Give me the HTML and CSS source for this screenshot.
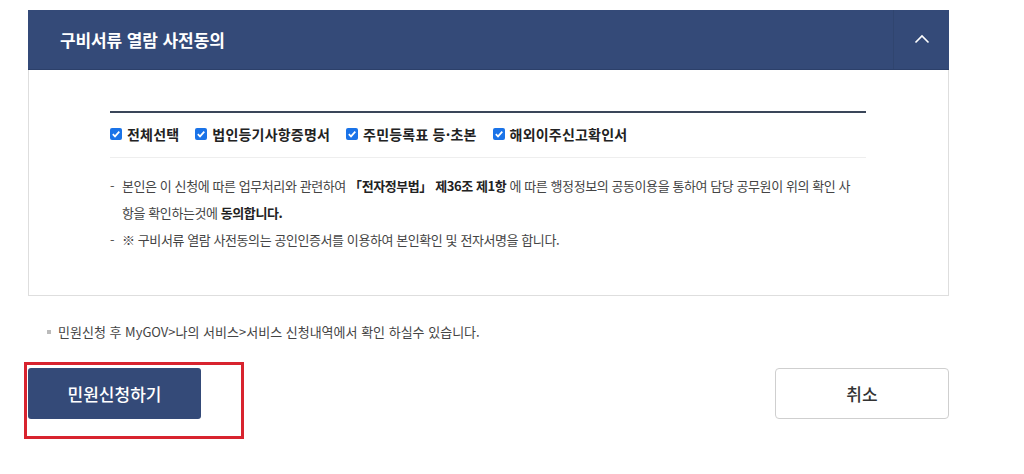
FILE: index.html
```html
<!DOCTYPE html>
<html lang="ko">
<head>
<meta charset="utf-8">
<link rel="stylesheet" href="styles.css">
</head>
<body>
<div class="wrap">
  <section class="panel">
    <div class="panel-head">
      <h2 class="panel-title">구비서류 열람 사전동의</h2>
      <button class="toggle" type="button" aria-label="접기">
        <svg width="16" height="10" viewBox="0 0 16 10"><path d="M1.5 8.5 L8 2 L14.5 8.5" fill="none" stroke="#fff" stroke-width="1.6"/></svg>
      </button>
    </div>
    <div class="panel-body">
      <div class="checks">
        <label class="chk"><span class="box"><svg viewBox="0 0 12 12" width="12" height="12"><path d="M2.8 6.2 L5 8.4 L9.3 3.6" fill="none" stroke="#fff" stroke-width="1.7"/></svg></span>전체선택</label>
        <label class="chk"><span class="box"><svg viewBox="0 0 12 12" width="12" height="12"><path d="M2.8 6.2 L5 8.4 L9.3 3.6" fill="none" stroke="#fff" stroke-width="1.7"/></svg></span>법인등기사항증명서</label>
        <label class="chk"><span class="box"><svg viewBox="0 0 12 12" width="12" height="12"><path d="M2.8 6.2 L5 8.4 L9.3 3.6" fill="none" stroke="#fff" stroke-width="1.7"/></svg></span>주민등록표 등·초본</label>
        <label class="chk"><span class="box"><svg viewBox="0 0 12 12" width="12" height="12"><path d="M2.8 6.2 L5 8.4 L9.3 3.6" fill="none" stroke="#fff" stroke-width="1.7"/></svg></span>해외이주신고확인서</label>
      </div>
      <ul class="desc">
        <li>본인은 이 신청에 따른 업무처리와 관련하여 <b>「전자정부법」 제36조 제1항</b> 에 따른 행정정보의 공동이용을 통하여 담당 공무원이 위의 확인 사<br>항을 확인하는것에 <b>동의합니다.</b></li>
        <li>※ 구비서류 열람 사전동의는 공인인증서를 이용하여 본인확인 및 전자서명을 합니다.</li>
      </ul>
    </div>
  </section>
  <p class="note">민원신청 후 MyGOV&gt;나의 서비스&gt;서비스 신청내역에서 확인 하실수 있습니다.</p>
  <div class="actions">
    <div class="highlight">
      <button class="btn primary" type="button">민원신청하기</button>
    </div>
    <button class="btn cancel" type="button">취소</button>
  </div>
</div>
</body>
</html>
```

FILE: styles.css
```css
* { box-sizing: border-box; }
html, body { margin: 0; padding: 0; background: #fff; }
body {
  font-family: "Noto Sans CJK KR", "Noto Sans", sans-serif;
  color: #333;
}
.wrap {
  width: 921px;
  margin-left: 28px;
  padding-top: 10px;
}
.panel-head {
  display: flex;
  height: 60px;
  background: #344a78;
  border-bottom: 1px solid #2c406a;
}
.panel-title {
  flex: 1;
  margin: 0;
  padding-left: 32px;
  display: flex;
  align-items: center;
  font-size: 17px;
  font-weight: 700;
  letter-spacing: -0.1px;
  color: #fff;
}
.toggle {
  width: 56px;
  border: 0;
  border-left: 1px solid #30456f;
  background: transparent;
  display: flex;
  align-items: center;
  justify-content: center;
  padding: 0 0 2px 0;
}
.panel-body {
  height: 226px;
  border: 1px solid #dedede;
  border-top: 0;
  padding: 41px 82px 0 81px;
}
.checks {
  display: flex;
  align-items: center;
  gap: 16px;
  height: 47px;
  border-top: 2px solid #3a4659;
  border-bottom: 1px solid #eeeeee;
  padding-bottom: 2px;
}
.chk {
  display: flex;
  align-items: center;
  gap: 5px;
  font-size: 14px;
  font-weight: 700;
  letter-spacing: 0.2px;
  color: #222;
}
.box {
  width: 12px;
  height: 12px;
  border-radius: 2px;
  background: #1a73e8;
  display: flex;
}
.desc {
  list-style: none;
  margin: 14px 0 0;
  padding: 0;
  font-size: 13px;
  letter-spacing: -0.42px;
  line-height: 27px;
  color: #444;
}
.desc li {
  position: relative;
  padding-left: 12px;
  white-space: nowrap;
}
.desc li::before {
  content: "-";
  position: absolute;
  left: 0;
  top: 0;
  color: #555;
}
.desc b { color: #222; }
.note {
  margin: 26px 0 0 19px;
  font-size: 13px;
  letter-spacing: 0;
  color: #444;
  line-height: 20px;
  display: flex;
  align-items: center;
  gap: 7px;
}
.note::before {
  content: "";
  width: 4px;
  height: 4px;
  background: #bbb;
}
.actions {
  display: flex;
  justify-content: space-between;
  align-items: flex-start;
  margin-top: 20px;
}
.highlight {
  margin-left: -4px;
  width: 220px;
  height: 77px;
  border: 3px solid #d8232e;
  padding: 3px 0 0 1px;
}
.btn {
  height: 51px;
  font-family: "Noto Sans CJK KR", sans-serif;
  font-size: 17px;
  font-weight: 500;
  letter-spacing: 0;
  border-radius: 3px;
  cursor: pointer;
}
.primary {
  width: 173px;
  background: #344a78;
  color: #fff;
  border: 0;
}
.cancel {
  width: 174px;
  margin-top: 6px;
  background: #fff;
  color: #333;
  border: 1px solid #cfcfcf;
  border-radius: 4px;
}
```
